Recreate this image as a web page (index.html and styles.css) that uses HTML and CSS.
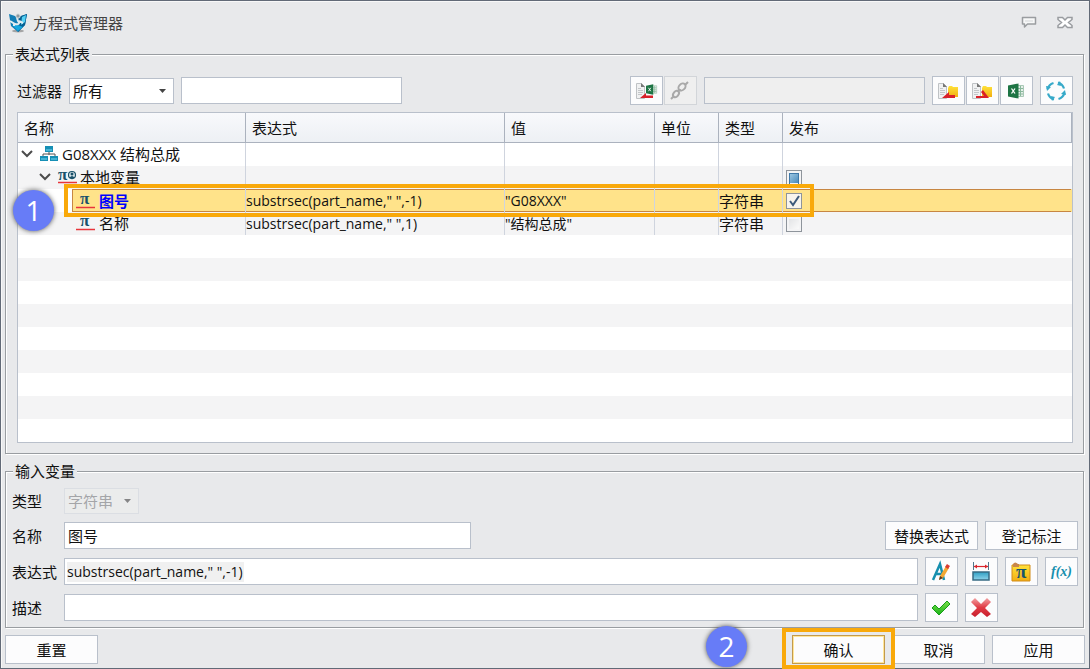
FILE: index.html
```html
<!DOCTYPE html>
<html lang="zh-CN">
<head>
<meta charset="utf-8">
<title>方程式管理器</title>
<link rel="stylesheet" href="styles.css">
</head>
<body>
<svg class="defs" aria-hidden="true">
  <defs>
    <linearGradient id="gold" x1="0" y1="0" x2="0" y2="1"><stop offset="0" stop-color="#ffe23a"/><stop offset="1" stop-color="#f2ae12"/></linearGradient>
    <linearGradient id="teal" x1="0" y1="0" x2="0" y2="1"><stop offset="0" stop-color="#2f9fc4"/><stop offset="1" stop-color="#8fd3ea"/></linearGradient>
    <linearGradient id="red" x1="0" y1="0" x2="0" y2="1"><stop offset="0" stop-color="#f2a0a2"/><stop offset=".5" stop-color="#e03a44"/><stop offset="1" stop-color="#c81e2c"/></linearGradient>
    <linearGradient id="green" x1="0" y1="0" x2="0" y2="1"><stop offset="0" stop-color="#7ee04c"/><stop offset="1" stop-color="#18b318"/></linearGradient>
    <symbol id="page" viewBox="0 0 20 16"><path d="M.5.5h5l3 3v12h-8z" fill="#f0f1f2" stroke="#bfc2c5"/><path d="M5 0l4 4H5z" fill="#777"/><path d="M2 5.500h3M2 7.500h5M2 9.500h5M2 11.500h4" stroke="#c3c6c9"/></symbol>
    <symbol id="excel" viewBox="0 0 16 16"><path d="M9 2.500h6.500v11H9z" fill="#e5efe9" stroke="#a9c8b6"/><path d="M10 5.500h5M10 8.500h5M10 11h5M12.500 3v10" stroke="#8ab89d"/><path d="M0 2.500L10.500.5v15L0 13.500z" fill="#1d7444"/><path d="M3.500 5.500l3.500 5M7 5.500l-3.500 5" stroke="#fff" stroke-width="1.300"/></symbol>
    <symbol id="pi" viewBox="0 0 19 16"><text x="4" y="11" class="pi-glyph">π</text><path d="M0 14.500h19" stroke="#e8353b" stroke-width="1.500"/></symbol>
  </defs>
</svg>
<main class="dialog">
  <header class="titlebar">
    <svg class="logo" width="20" height="20" viewBox="0 0 20 20"><ellipse cx="10" cy="18" rx="6" ry="1.500" fill="#777" opacity=".6"/><path d="M1 1l9 3 9-3-2 11-7 7-7-6z" fill="#117db5"/><path d="M10 4l9-3-2 11-7 7z" fill="#075f91"/><path d="M14 4l4-2-1 7-4 3z" fill="#55d0f3"/><path d="M4 12l6 6 5-4-5-2z" fill="#14a7df"/><path d="M2 8l5 3c4 1 5-1 3-3L9 5M11 8l4 2M6 11v2" fill="none" stroke="#e0ecf0" stroke-width="2"/><circle cx="10" cy="3" r="2.200" fill="#8d999f" stroke="#dfe5e7"/></svg>
    <h1 class="title">方程式管理器</h1>
    <div class="window-tools">
      <button class="plain" aria-label="反馈"><svg width="16" height="14" viewBox="0 0 16 14"><path d="M1.500 1.500h13v6.500H6.500l-3 3V8h-2z" fill="#f7f8f8" stroke="#9a9da0" stroke-width="1.500" stroke-linejoin="round"/><path d="M4 5h8" stroke="#d5d7d9"/></svg></button>
      <button class="plain" aria-label="关闭"><svg width="16" height="14" viewBox="0 0 16 14"><path d="M1 1.500h4.500L8 4l2.500-2.500H15v2L11.500 6.500l3.500 3v2h-4.500L8 9l-2.500 2.500H1v-2l3.500-3L1 3.500z" fill="#fff" stroke="#999ca0" stroke-width="1.500"/></svg></button>
    </div>
  </header>

  <fieldset class="group list-group">
    <legend>表达式列表</legend>
    <div class="toolbar">
      <label class="filter-label" for="filter">过滤器</label>
      <select id="filter" class="select filter-select"><option>所有</option></select>
      <input class="field tool-field" type="text" aria-label="过滤文本">
      <span class="spacer"></span>
      <span class="button-pair">
        <button class="btn icon-btn" aria-label="链接 Excel"><svg width="20" height="16" viewBox="0 0 20 16"><use href="#page" width="20" height="16"/><use href="#excel" x="10" y="1" width="11" height="11"/><path d="M4 15l6-5v2.500h7V15z" fill="#d9202a"/></svg></button>
        <button class="btn icon-btn" disabled aria-label="断开链接"><svg width="20" height="20" viewBox="0 0 20 20" fill="none" stroke="#a9a9a9" stroke-width="2"><path d="M1 18l3-3M15 4l3-3"/><ellipse cx="6" cy="13" rx="3.500" ry="2.500" transform="rotate(-50 6 13)"/><ellipse cx="12" cy="6" rx="4" ry="3" transform="rotate(-45 12 6)"/><path d="M7 10l4-1"/></svg></button>
      </span>
      <input class="field tool-field" type="text" disabled aria-label="链接文件">
      <span class="button-pair">
        <button class="btn icon-btn" aria-label="导入"><svg width="20" height="16" viewBox="0 0 20 16"><use href="#page" width="20" height="16"/><path d="M10 5l1-2h3l1 1h5v10H10z" fill="url(#gold)"/><path d="M4 15l7-6v3h6v3z" fill="#d9202a"/></svg></button>
        <button class="btn icon-btn" aria-label="导出"><svg width="20" height="16" viewBox="0 0 20 16"><use href="#page" width="20" height="16"/><path d="M10 5l1-2h3l1 1h5v10H10z" fill="url(#gold)"/><path d="M4 13h8L9 9l2-2 6 8H4z" fill="#d9202a"/></svg></button>
        <button class="btn icon-btn" aria-label="Excel"><svg width="16" height="16"><use href="#excel"/></svg></button>
      </span>
      <button class="btn icon-btn" aria-label="刷新"><svg width="20" height="20" viewBox="0 0 20 20" fill="none" stroke="#36a9c9" stroke-width="2.200"><path d="M1.500 8a9 9 0 0 1 6-6M12 1.500a9 9 0 0 1 6 6M18.500 12a9 9 0 0 1-6 6M8 18.500a9 9 0 0 1-6-6"/><g fill="#36a9c9" stroke="none"><path d="M0 5l5 1-4 4zM14 0l-3 4 4 1zM20 14l-5-1 4-4zM6 20l3-4-4-1z"/></g></svg></button>
    </div>

    <div class="grid">
      <table class="table">
        <colgroup><col class="c-name"><col class="c-expr"><col class="c-value"><col class="c-unit"><col class="c-type"><col></colgroup>
        <thead><tr><th>名称</th><th>表达式</th><th>值</th><th>单位</th><th>类型</th><th>发布</th></tr></thead>
        <tbody>
          <tr>
            <td><div class="node level-0"><button class="plain" aria-label="折叠"><svg width="12" height="8" viewBox="0 0 12 8"><path d="M1 1l5 5 5-5" fill="none" stroke="#4c4c4c" stroke-width="2"/></svg></button><svg class="node-icon" width="18" height="16" viewBox="0 0 18 16"><path d="M9 5v4M3 11V8h12v3" fill="none" stroke="#555"/><path d="M5 0h8v6H5zM0 10h8v5H0zM10 10h8v5h-8z" fill="#168fb5"/><path d="M6 3h6v2H6zM1 12h6v2H1zM11 12h6v2h-6z" fill="#46b4d4"/></svg><span class="node-text">G08XXX 结构总成</span></div></td>
            <td></td><td></td><td></td><td></td><td></td>
          </tr>
          <tr>
            <td><div class="node level-1"><button class="plain" aria-label="折叠"><svg width="12" height="8" viewBox="0 0 12 8"><path d="M1 1l5 5 5-5" fill="none" stroke="#4c4c4c" stroke-width="2"/></svg></button><svg class="node-icon" width="18" height="16" viewBox="0 0 18 16"><text x="0" y="11" class="pi-glyph">π</text><circle cx="14" cy="6" r="3.500" fill="#dfe9ed" stroke="#184f68" stroke-width="1.200"/><circle cx="14" cy="5" r="1.500" fill="#184f68"/><path d="M11.500 8.500q2.500-3 5 0l-2.500 2z" fill="#184f68"/><path d="M0 13.500h19" stroke="#e8353b" stroke-width="1.500"/></svg><span class="node-text">本地变量</span></div></td>
            <td></td><td></td><td></td><td></td><td class="check-cell"><input class="check partial" type="checkbox" aria-label="发布 本地变量"></td>
          </tr>
          <tr class="selected">
            <td><div class="node level-2"><svg class="node-icon" width="19" height="16"><use href="#pi"/></svg><span class="node-text">图号</span></div></td>
            <td>substrsec(part_name," ",-1)</td><td>"G08XXX"</td><td></td><td class="type-cell">字符串</td><td class="check-cell"><input class="check" type="checkbox" checked aria-label="发布 图号"></td>
          </tr>
          <tr>
            <td><div class="node level-2"><svg class="node-icon" width="19" height="16"><use href="#pi"/></svg><span class="node-text">名称</span></div></td>
            <td>substrsec(part_name," ",1)</td><td>"结构总成"</td><td></td><td class="type-cell">字符串</td><td class="check-cell"><input class="check" type="checkbox" aria-label="发布 名称"></td>
          </tr>
        </tbody>
      </table>
      <div class="mark row-mark"></div>
      <div class="badge row-badge">1</div>
    </div>
  </fieldset>

  <fieldset class="group">
    <legend>输入变量</legend>
    <div class="form">
      <div class="form-row type-row"><label for="type">类型</label><select id="type" class="select type-select" disabled><option>字符串</option></select></div>
      <div class="form-row"><label for="name">名称</label><input id="name" class="field name-field" type="text" value="图号"><span class="spacer"></span><button class="btn">替换表达式</button><button class="btn">登记标注</button></div>
      <div class="form-row"><label for="expr">表达式</label><input id="expr" class="field wide-field expr-field" type="text" value='substrsec(part_name," ",-1)'>
        <div class="actions">
          <button class="btn icon-btn" aria-label="编辑"><svg width="20" height="20" viewBox="0 0 20 20"><path d="M2 18L9 2l4 16M5 12h7" fill="none" stroke="#168fae" stroke-width="2.500"/><path d="M9 14L15 4l3 2-6 10-4 2z" fill="#f1a733"/><path d="M14 5l2-3 3 2-2 3z" fill="#d93c32"/><path d="M8 18l1-4 3 2z" fill="#5b3721"/></svg></button>
          <button class="btn icon-btn" aria-label="尺寸"><svg width="18" height="20" viewBox="0 0 18 20"><path d="M1.500 0v8M16.500 0v8" stroke="#52768b"/><path d="M2 4.500h14" stroke="#d9252d" stroke-width="1.200"/><path d="M2 4.500l3-2v4zM16 4.500l-3-2v4z" fill="#d9252d"/><path d="M1 10h16v8H1z" fill="url(#teal)" stroke="#376b84" stroke-width="1.500"/></svg></button>
          <button class="btn icon-btn" aria-label="变量库"><svg width="20" height="20" viewBox="0 0 20 20"><path d="M1 3h18v16H1z" fill="url(#gold)" stroke="#d18b18"/><path d="M2 5V2q2-3 5 0h1v3z" fill="#c9864b"/><text x="5" y="16" class="folder-pi">π</text></svg></button>
          <button class="btn icon-btn" aria-label="函数"><svg width="22" height="20" viewBox="0 0 22 20"><text x="1" y="14" class="fx">f(x)</text></svg></button>
        </div>
      </div>
      <div class="form-row"><label for="desc">描述</label><input id="desc" class="field wide-field" type="text">
        <div class="actions">
          <button class="btn icon-btn" aria-label="接受"><svg width="20" height="18" viewBox="0 0 20 18"><path d="M1 9l3-3 4 4 8-8 3 3L8 16z" fill="url(#green)" stroke="#169e18"/></svg></button>
          <button class="btn icon-btn" aria-label="删除"><svg width="20" height="20" viewBox="0 0 20 20"><path d="M4 0l6 6 6-6 4 4-6 6 6 6-4 3-6-5-6 5-4-3 6-6-6-6z" fill="url(#red)"/></svg></button>
        </div>
      </div>
    </div>
  </fieldset>

  <footer class="footer">
    <button class="btn">重置</button>
    <span class="spacer"></span>
    <div class="confirm">
      <button class="btn primary">确认</button>
      <div class="mark confirm-mark"></div>
      <div class="badge confirm-badge">2</div>
    </div>
    <button class="btn">取消</button>
    <button class="btn">应用</button>
  </footer>
</main>
</body>
</html>
```
FILE: styles.css
```css
* { box-sizing: border-box; }
body {
  margin: 0;
  color: #111;
  font: 15px/20px "Open Sans", "Noto Sans CJK SC", sans-serif;
}
button, input, select { margin: 0; color: inherit; font: inherit; }
svg { display: block; flex: none; overflow: visible; }
symbol { overflow: visible; }
.defs { position: absolute; width: 0; height: 0; }
.spacer { flex: 1; }

.dialog {
  display: flex;
  flex-direction: column;
  min-height: 100vh;
  padding: 0 4px 4px;
  background: #e8e9eb;
  border: 1px solid #626a77;
  box-shadow: inset 1px 1px 0 #f8f8f8;
}
.titlebar {
  display: flex;
  align-items: center;
  gap: 5px;
  height: 43px;
  padding: 0 12px 0 3px;
}
.title { flex: 1; margin: 0; color: #444; font-size: 15px; font-weight: 400; }
.window-tools { display: flex; gap: 20px; }
.plain { padding: 0; background: none; border: 0; }

.group {
  display: flex;
  flex-direction: column;
  min-width: 0;
  margin: 0 1px 0 0;
  padding: 6px 5px 5px 6px;
  border: 1px solid #999da1;
  box-shadow: 1px 1px 0 #fff, inset 1px 1px 0 #fff;
}
.group legend { height: 20px; margin-left: 1px; padding: 0 2px; background: #e8e9eb; }
.list-group { flex: 1; margin-bottom: 7px; padding: 12px 10px 10px 11px; }
.list-group legend { margin-left: -4px; }

.toolbar { display: flex; align-items: center; gap: 7px; margin-bottom: 7px; }
.filter-label { width: 45px; white-space: nowrap; }
.button-pair { display: flex; gap: 1px; }
.select {
  height: 26px;
  padding: 0 4px 0 3px;
  border: 1px solid #b9c0cb;
  border-radius: 0;
  appearance: none;
  background: url("data:image/svg+xml,%3Csvg xmlns='http://www.w3.org/2000/svg' width='7' height='4'%3E%3Cpath d='M0 0h7L3.5 4z' fill='%23444'/%3E%3C/svg%3E") no-repeat right 7px top 10px #fff;
}
.filter-select { width: 105px; }
.field {
  height: 27px;
  min-width: 0;
  padding: 0 3px;
  background: #fff;
  border: 1px solid #b9c0cb;
  border-radius: 0;
}
.field:disabled { background: #efefef; }
.tool-field { flex: 0 1 221px; width: 221px; }
.expr-field {
  padding: 0 2px;
  background: linear-gradient(#f0f0f0, #f0f0f0) 2px center / 177px 20px no-repeat #fff;
  font-size: 14px;
}

.btn {
  display: flex;
  flex: none;
  align-items: center;
  justify-content: center;
  width: 93px;
  height: 29px;
  padding: 0;
  background: #fcfcfd;
  border: 1px solid #b9c0cb;
}
.icon-btn { width: 33px; padding-right: 2px; }
.btn:disabled { background: #efefef; border-color: #d2d5d9; }

.grid {
  position: relative;
  min-height: calc(100vh - 338px);
  background: repeating-linear-gradient(#fff 0 23px, #f4f4f5 23px 46px) 0 30px;
  border: 1px solid #b9c0cb;
}
.table { width: 100%; table-layout: fixed; border-collapse: separate; border-spacing: 0; }
.c-name { width: 228px; }
.c-expr { width: 259px; }
.c-value { width: 150px; }
.c-unit, .c-type { width: 64px; }
.table th {
  height: 30px;
  padding: 0 6px;
  background: linear-gradient(#f8f9fc, #edf0f4);
  border-right: 1px solid #abb2be;
  border-bottom: 1px solid #abb2be;
  font-weight: 400;
  text-align: left;
}
.table td {
  height: 23px;
  padding: 0;
  border-right: 1px solid #cfd4de;
  font-size: 14px;
  line-height: 20px;
  white-space: nowrap;
}
.table td:last-child { border-right-color: transparent; }
.table .type-cell { font-size: 15px; }
.node { display: flex; align-items: center; height: 23px; padding-bottom: 2px; font-size: 15px; }
.level-0 { padding-left: 3px; }
.level-1 { padding-left: 21px; }
.level-2 { padding-left: 58px; }
.plain + .node-icon { margin-left: 7px; }
.node-text { margin-left: 4px; }
.selected td:not(:first-child) { background: #ffe38a; box-shadow: inset 0 1px #c78642, inset 0 -1px #c78642; }
.selected .node {
  margin-left: 54px;
  padding: 0 0 0 3px;
  background: #ffe38a;
  border: solid #c78642;
  border-width: 1px 0 1px 1px;
}
.selected .node-text { color: #00f; font-weight: 700; }
.table .check-cell { padding-left: 3px; }
.check {
  display: block;
  width: 16px;
  height: 16px;
  padding: 2px;
  appearance: none;
  background: linear-gradient(135deg, #e3e4e6, #fafafa) content-box #f4f4f4;
  border: 1px solid #8e949b;
}
.partial {
  background: linear-gradient(135deg, #a4cce6, #4687b9) content-box #fff;
}
.partial::before {
  display: block;
  height: 10px;
  border: 1px solid #3f78a8;
  content: "";
}
.check:checked { background: url("data:image/svg+xml,%3Csvg xmlns='http://www.w3.org/2000/svg' width='14' height='14'%3E%3Cpath d='M3 7l3 4 6-9' fill='none' stroke='%233d5a7b' stroke-width='2'/%3E%3C/svg%3E") center no-repeat #f7f4ed; }

.pi-glyph { fill: #18526c; font: bold 17px "Liberation Serif", serif; }
.folder-pi { fill: #17546b; font: bold 19px "Liberation Serif", serif; }
.fx { fill: #168fae; font: italic bold 14px "Liberation Serif", serif; }

.form { display: flex; flex-direction: column; gap: 7px; }
.form-row { display: flex; align-items: center; gap: 7px; min-height: 29px; }
.form-row label { width: 45px; white-space: nowrap; }
.type-row { min-height: 27px; }
.type-select { width: 75px; }
.type-select:disabled { color: #77797c; background-color: #eee; border-color: #d3d8df; opacity: .6; }
.name-field { flex: 0 1 407px; width: 407px; }
.wide-field { flex: 1; }
.actions { display: flex; gap: 7px; width: 153px; }

.footer { display: flex; gap: 7px; padding-top: 7px; }
.confirm { position: relative; }
.primary { border-color: #c39a4d; box-shadow: inset 0 0 0 1px #ffe69a; }

.mark { position: absolute; border: 4px solid #f9a90a; pointer-events: none; }
.row-mark { top: 71px; left: 46px; width: 750px; height: 33px; }
.confirm-mark { inset: -7px -10px -5px; }
.badge {
  position: absolute;
  width: 41px;
  height: 41px;
  color: #fff;
  background: #677cf7;
  border-radius: 50%;
  box-shadow: 0 0 5px #555;
  font: 28px/40px "Open Sans", sans-serif;
  text-align: center;
}
.row-badge { top: 77px; left: -5px; }
.confirm-badge { top: -9px; left: -86px; }
```
